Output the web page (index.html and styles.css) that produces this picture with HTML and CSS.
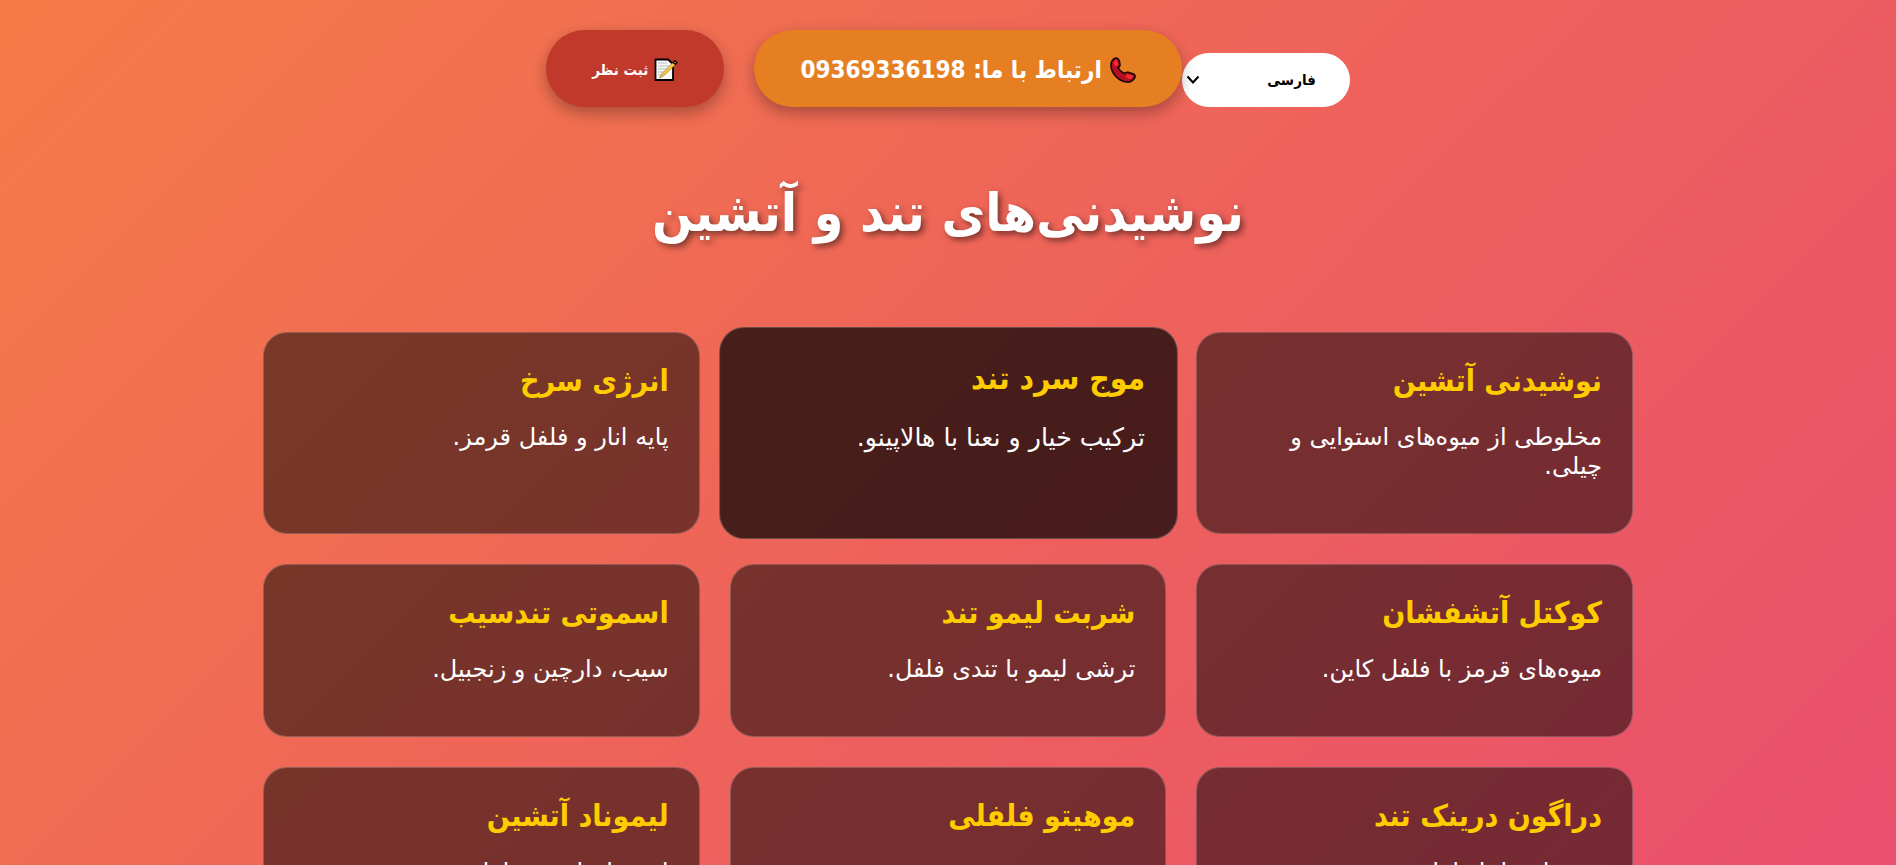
FILE: index.html
```html
<!DOCTYPE html>
<html lang="fa" dir="rtl">
<head>
    <meta charset="UTF-8">
    <meta name="viewport" content="width=device-width, initial-scale=1.0">
    <title>نوشیدنی‌های تند و آتشین</title>
    <link rel="stylesheet" href="styles.css">
</head>
<body>
    <header class="top-bar">
        <select class="lang-select" aria-label="زبان">
            <option value="fa" selected>فارسی</option>
            <option value="en">English</option>
        </select>
        <div class="actions">
            <a class="btn contact-btn" href="tel:09369336198">
                <svg class="icon-phone" viewBox="0 0 26 26" aria-hidden="true">
                    <path d="M1.500 5 Q3.500 1 6.500 1 Q8.500 1.300 9.500 4.500 L10 8 Q10 10 8 10.500 Q9.500 14 14 16.500 Q16 14.800 18 15.300 L23.500 17 Q26 18.500 24.500 21 Q22 25.500 16 25 Q10 24 5.500 19 Q-0.500 12 1.500 5 Z" fill="#b5101f" stroke="#1a0505" stroke-width="1.600"/>
                    <path d="M3.500 5.500 Q5 2.500 7 3 L8.300 8 L5 9.300 Z M15.500 19.500 L17.500 17.200 L23 19 Q22.500 21.500 19 22 Z" fill="#f92f2f"/>
                </svg>
                <span>ارتباط با ما: 09369336198</span>
            </a>
            <button class="btn review-btn" type="button">
                <svg class="icon-memo" viewBox="0 0 24 24" aria-hidden="true">
                    <path d="M1.500 1.500 H14 L19 6 V22 H1.500 Z" fill="#f8f8f8" stroke="#000" stroke-width="1.800"/>
                    <path d="M4 5 H13 M4 8 H15 M4 11 H13 M4 14 H11 M4 17 H9" stroke="#b8bcc0" stroke-width="1"/>
                    <path d="M20 3.500 L22.500 5.500 L10 17.500 L5.500 20 L8 15.500 Z" fill="#f6c945" stroke="#8a6a18" stroke-width="0.600"/>
                    <path d="M19 4.500 L21 2.500 L23 4.500 L21.300 6.500 Z" fill="#d9a441" stroke="#000" stroke-width="1.200"/>
                </svg>
                <span>ثبت نظر</span>
            </button>
        </div>
    </header>

    <h1>نوشیدنی‌های تند و آتشین</h1>

    <main class="menu">
        <div class="card">
            <h3>نوشیدنی آتشین</h3>
            <p>مخلوطی از میوه‌های استوایی و چیلی.</p>
        </div>
        <div class="card active">
            <h3>موج سرد تند</h3>
            <p>ترکیب خیار و نعنا با هالاپینو.</p>
        </div>
        <div class="card">
            <h3>انرژی سرخ</h3>
            <p>پایه انار و فلفل قرمز.</p>
        </div>
        <div class="card">
            <h3>کوکتل آتشفشان</h3>
            <p>میوه‌های قرمز با فلفل کاین.</p>
        </div>
        <div class="card">
            <h3>شربت لیمو تند</h3>
            <p>ترشی لیمو با تندی فلفل.</p>
        </div>
        <div class="card">
            <h3>اسموتی تندسیب</h3>
            <p>سیب، دارچین و زنجبیل.</p>
        </div>
        <div class="card">
            <h3>دراگون درینک تند</h3>
            <p>میوه اژدها با فلفل.</p>
        </div>
        <div class="card">
            <h3>موهیتو فلفلی</h3>
            <p>نعنع و سس تند.</p>
        </div>
        <div class="card">
            <h3>لیموناد آتشین</h3>
            <p>لیمو با چاشنی فلفل.</p>
        </div>
    </main>
</body>
</html>
```
FILE: styles.css
```css
* {
    box-sizing: border-box;
}
html {
    height: 100%;
    overflow: hidden;
}
body {
    font-family: 'DejaVu Sans Condensed', 'DejaVu Sans', sans-serif;
    margin: 0;
    height: 100%;
    padding: 30px 20px 0;
    background: linear-gradient(135deg, #f47b47 0%, #ee625b 52%, #ea4f6d 100%);
    color: #fff;
}
.top-bar {
    display: flex;
    justify-content: center;
    align-items: flex-end;
}
.actions {
    display: flex;
    gap: 30px;
}
.btn {
    display: flex;
    align-items: center;
    gap: 8px;
    height: 77px;
    padding: 2px 46px 0;
    border: none;
    border-radius: 40px;
    color: #fff;
    font-weight: bold;
    text-decoration: none;
    box-shadow: 0 6px 15px rgba(0,0,0,0.3);
    cursor: pointer;
}
.contact-btn {
    background: #e67e22;
    font-size: 24px;
}
.review-btn {
    gap: 6px;
    background: #c0392b;
    font-family: 'DejaVu Sans Condensed', 'DejaVu Sans', sans-serif;
    font-size: 15px;
}
.icon-phone {
    width: 26px;
    height: 26px;
}
.icon-memo {
    width: 24px;
    height: 24px;
}
.lang-select {
    width: 168px;
    height: 54px;
    padding: 0 34px;
    border: none;
    border-radius: 27px;
    appearance: none;
    background: #fff url("data:image/svg+xml,%3Csvg xmlns='http://www.w3.org/2000/svg' width='14' height='10'%3E%3Cpath d='M1.500 1.500 L7 7.500 L12.500 1.500' fill='none' stroke='%23000' stroke-width='2'/%3E%3C/svg%3E") no-repeat 4px center;
    color: #000;
    font-family: 'DejaVu Sans Condensed', 'DejaVu Sans', sans-serif;
    font-size: 15px;
    font-weight: bold;
}
h1 {
    margin: 68px 0 82px;
    font-size: 53px;
    line-height: 75px;
    text-align: center;
    text-shadow: 3px 3px 6px rgba(0,0,0,0.5);
}
.menu {
    display: grid;
    grid-template-columns: repeat(3, 1fr);
    gap: 30px;
    max-width: 1370px;
    margin: 0 auto;
}
.card {
    padding: 30px;
    border: 1px solid rgba(255,255,255,0.2);
    border-radius: 24px;
    background: rgba(0,0,0,0.5);
}
.card.active {
    background: rgba(0,0,0,0.7);
    transform: scale(1.05);
}
.card h3 {
    margin: 0;
    color: #fc0;
    font-size: 30px;
    line-height: 36px;
}
.card p {
    margin: 24px 0 22px;
    font-family: 'DejaVu Sans', sans-serif;
    font-size: 24px;
    line-height: 29px;
}
```
